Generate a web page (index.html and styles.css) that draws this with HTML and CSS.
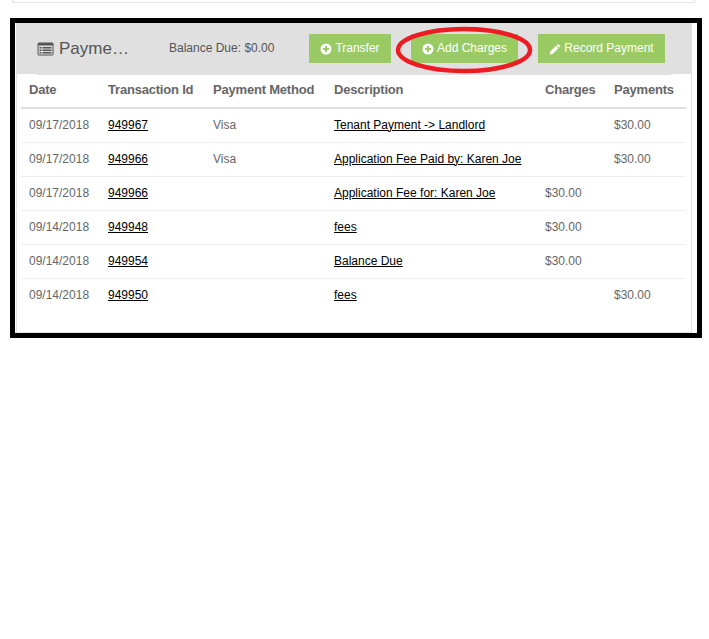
FILE: index.html
```html
<!DOCTYPE html>
<html lang="en">
<head>
    <meta charset="UTF-8">
    <meta name="viewport" content="width=device-width, initial-scale=1.0">
    <title>Payments</title>
    <link rel="stylesheet" href="styles.css">
</head>
<body>
    <div class="top-strip"></div>

    <div class="frame">
        <div class="panel">
            <div class="panel-head">
                <div class="panel-title">
                    <svg class="title-icon" viewBox="0 0 17 14" width="17" height="14">
                        <rect x="0.5" y="0.5" width="16" height="13" rx="1.5" fill="#555"/>
                        <rect x="1.5" y="3.5" width="14" height="9" fill="#e0e0e0"/>
                        <path d="M2.5 5h2v1.5h-2zM2.5 7.5h2V9h-2zM2.5 10h2v1.5h-2zM5.5 5h9v1.5h-9zM5.5 7.5h9V9h-9zM5.5 10h9v1.5h-9z" fill="#555"/>
                    </svg>
                    <span>Payme…</span>
                </div>
                <div class="balance">Balance Due: $0.00</div>
                <div class="actions">
                    <a class="btn btn-transfer">
                        <svg class="btn-icon" viewBox="0 0 12 12" width="12" height="12"><path fill-rule="evenodd" d="M6 0.5a5.5 5.5 0 1 0 0 11a5.5 5.5 0 0 0 0-11zM5 3h2v2h2v2H7v2H5V7H3V5h2z" fill="#fff"/></svg>
                        <span>Transfer</span>
                    </a>
                    <a class="btn btn-charges">
                        <svg class="btn-icon" viewBox="0 0 12 12" width="12" height="12"><path fill-rule="evenodd" d="M6 0.5a5.5 5.5 0 1 0 0 11a5.5 5.5 0 0 0 0-11zM5 3h2v2h2v2H7v2H5V7H3V5h2z" fill="#fff"/></svg>
                        <span>Add Charges</span>
                    </a>
                    <a class="btn btn-record">
                        <svg class="btn-icon" viewBox="0 0 12 12" width="12" height="12"><path d="M9 0.800l2.400 2.400-1.400 1.400-2.400-2.400zM7 2.800l2.400 2.400-5.800 5.800-3 0.600 0.600-3z" fill="#fff"/></svg>
                        <span>Record Payment</span>
                    </a>
                </div>
            </div>
            <div class="head-edge"></div>

            <table class="payments">
                <thead>
                    <tr>
                        <th class="col-date">Date</th>
                        <th class="col-id">Transaction Id</th>
                        <th class="col-method">Payment Method</th>
                        <th class="col-desc">Description</th>
                        <th class="col-charges">Charges</th>
                        <th>Payments</th>
                    </tr>
                </thead>
                <tbody>
                    <tr>
                        <td>09/17/2018</td>
                        <td><a href="#">949967</a></td>
                        <td>Visa</td>
                        <td><a href="#">Tenant Payment -&gt; Landlord</a></td>
                        <td></td>
                        <td>$30.00</td>
                    </tr>
                    <tr>
                        <td>09/17/2018</td>
                        <td><a href="#">949966</a></td>
                        <td>Visa</td>
                        <td><a href="#">Application Fee Paid by: Karen Joe</a></td>
                        <td></td>
                        <td>$30.00</td>
                    </tr>
                    <tr>
                        <td>09/17/2018</td>
                        <td><a href="#">949966</a></td>
                        <td></td>
                        <td><a href="#">Application Fee for: Karen Joe</a></td>
                        <td>$30.00</td>
                        <td></td>
                    </tr>
                    <tr>
                        <td>09/14/2018</td>
                        <td><a href="#">949948</a></td>
                        <td></td>
                        <td><a href="#">fees</a></td>
                        <td>$30.00</td>
                        <td></td>
                    </tr>
                    <tr>
                        <td>09/14/2018</td>
                        <td><a href="#">949954</a></td>
                        <td></td>
                        <td><a href="#">Balance Due</a></td>
                        <td>$30.00</td>
                        <td></td>
                    </tr>
                    <tr>
                        <td>09/14/2018</td>
                        <td><a href="#">949950</a></td>
                        <td></td>
                        <td><a href="#">fees</a></td>
                        <td></td>
                        <td>$30.00</td>
                    </tr>
                </tbody>
            </table>
        </div>

        <!-- red marker drawn over the screenshot -->
        <svg class="marker" viewBox="0 0 144 52" width="144" height="52">
            <ellipse cx="72" cy="26" rx="66" ry="21" fill="none" stroke="#ed1c24" stroke-width="4.500"/>
        </svg>
    </div>
</body>
</html>
```

FILE: styles.css
```css
body {
    font-family: "Liberation Sans", Arial, sans-serif;
    font-size: 12px;
    margin: 0;
    background: white;
    color: #666;
}

.top-strip {
    width: 681px;
    height: 2px;
    margin-left: 12px;
    border: 1px solid #e3e3e3;
    border-top: none;
}

.frame {
    position: relative;
    box-sizing: border-box;
    width: 692px;
    height: 320px;
    margin: 15px 0 0 10px;
    border: 5px solid black;
}

.panel {
    box-sizing: border-box;
    width: 676px;
    height: 310px;
    margin-left: 1px;
    border-right: 1px solid #e3e3e3;
    border-bottom: 1px solid #e3e3e3;
    border-left: 1px solid #e3e3e3;
}

.panel-head {
    display: flex;
    align-items: center;
    height: 51px;
    background: #e0e0e0;
    margin-left: -1px;
    margin-right: -1px;
}

.head-edge {
    height: 1px;
    margin: 0 20px;
    background: #e0e0e0;
}

.panel-title {
    display: flex;
    align-items: center;
    width: 132px;
    margin-left: 21px;
    font-size: 17px;
    color: #555;
}

.title-icon {
    margin-right: 5px;
}

.balance {
    width: 140px;
    padding-bottom: 2px;
    color: #555;
}

.actions {
    display: flex;
    gap: 20px;
}

.btn {
    display: flex;
    align-items: center;
    justify-content: center;
    gap: 3px;
    height: 29px;
    background: #99ca64;
    color: white;
    font-size: 12px;
}

.btn span {
    padding-bottom: 2px;
}

.btn-transfer {
    width: 82px;
}

.btn-charges {
    width: 107px;
}

.btn-record {
    width: 127px;
}

.payments {
    width: 665px;
    margin-left: 4px;
    border-collapse: collapse;
    table-layout: fixed;
}

.payments th {
    height: 28px;
    padding: 0 8px 4px;
    text-align: left;
    white-space: nowrap;
    font-size: 13px;
    letter-spacing: -0.2px;
    color: #666;
    border-bottom: 2px solid #ddd;
}

.payments td {
    height: 31px;
    padding: 0 8px 2px;
    border-bottom: 1px solid #eee;
}

.payments tbody tr:last-child td {
    border-bottom: none;
}

.payments a {
    color: black;
    text-decoration: underline;
}

.col-date {
    width: 63px;
}

.col-id {
    width: 89px;
}

.col-method {
    width: 105px;
}

.col-desc {
    width: 195px;
}

.col-charges {
    width: 53px;
}

.marker {
    position: absolute;
    left: 377px;
    top: 1px;
}
```
